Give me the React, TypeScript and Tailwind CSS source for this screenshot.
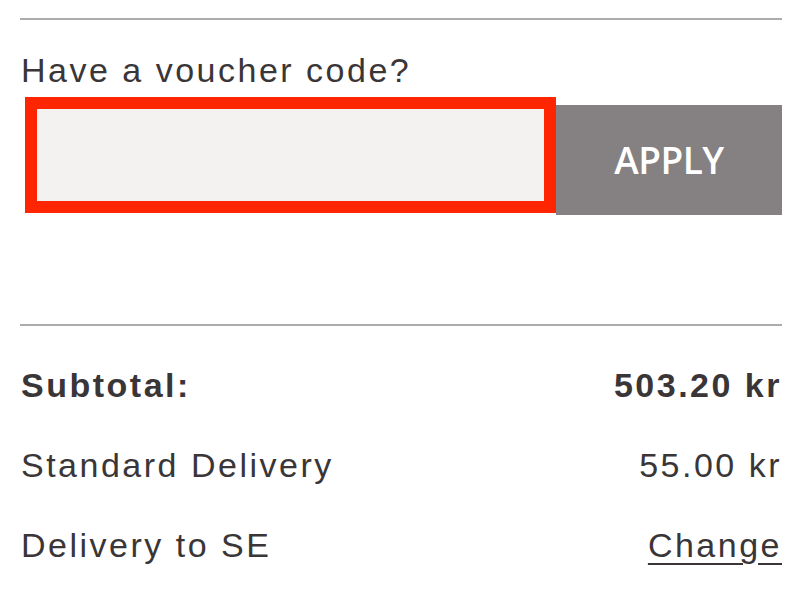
import React, { useState } from 'react';

interface SummaryRow {
  label: string;
  value: string;
  bold?: boolean;
  link?: boolean;
}

const rows: SummaryRow[] = [
  { label: 'Subtotal:', value: '503.20 kr', bold: true },
  { label: 'Standard Delivery', value: '55.00 kr' },
  { label: 'Delivery to SE', value: 'Change', link: true },
];

const App: React.FC = () => {
  const [code, setCode] = useState('');

  return (
    <div className="w-[800px] h-[600px] bg-white pl-[20px] pr-[18px] pt-[18px] text-[#3a3637] font-['Liberation_Sans',Arial,sans-serif]">
      <div className="h-[2px] bg-[#acacac]" />

      {/* Voucher */}
      <div className="pt-[34px]">
        <p className="text-[34px] leading-[32px] tracking-[2.5px] pl-[1px]">Have a voucher code?</p>
        <div className="flex items-start mt-[11px] pl-[5px]">
          <input
            value={code}
            onChange={(e) => setCode(e.target.value)}
            className="w-[531px] h-[116px] border-[12px] border-[#fe2600] bg-[#f3f2f1] outline-none px-3 text-[28px]"
          />
          <button className="mt-[8px] w-[226px] h-[110px] bg-[#858081] text-white text-[37px] font-semibold tracking-[-0.5px] font-['Open_Sans',sans-serif]">
            APPLY
          </button>
        </div>
      </div>

      <div className="mt-[109px] h-[2px] bg-[#acacac]" />

      {/* Totals */}
      <div className="pt-[43px] flex flex-col gap-[48px]">
        {rows.map((row) => (
          <div
            key={row.label}
            className={`flex justify-between items-center text-[34px] leading-[32px] tracking-[2.5px] pl-[1px] ${row.bold ? 'font-bold' : ''}`}
          >
            <span>{row.label}</span>
            {row.link ? (
              <a className="underline decoration-2 underline-offset-[6px] cursor-pointer">{row.value}</a>
            ) : (
              <span>{row.value}</span>
            )}
          </div>
        ))}
      </div>
    </div>
  );
};

export default App;
